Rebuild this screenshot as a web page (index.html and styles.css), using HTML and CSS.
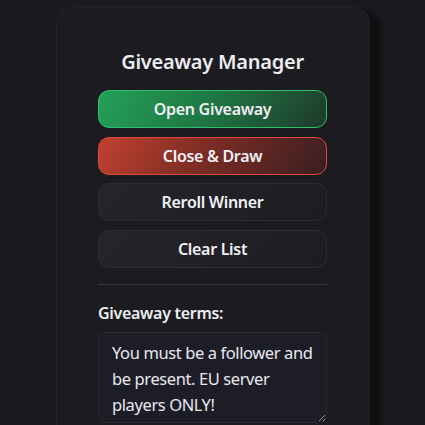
FILE: index.html
```html
<!DOCTYPE html>
<html lang="en">

<head>
    <meta charset="UTF-8">
    <meta name="viewport" content="width=device-width, initial-scale=1.0">
    <title>Giveaway Manager</title>
    <link rel="stylesheet" href="styles.css">
</head>

<body>
    <div class="panel">
        <h1 class="panel-title">Giveaway Manager</h1>
        <div class="actions">
            <button class="btn btn-open">Open Giveaway</button>
            <button class="btn btn-close">Close &amp; Draw</button>
            <button class="btn">Reroll Winner</button>
            <button class="btn">Clear List</button>
        </div>
        <hr class="divider">
        <label class="terms-label" for="terms">Giveaway terms:</label>
        <textarea id="terms" class="terms">You must be a follower and be present. EU server players ONLY!</textarea>
    </div>
</body>

</html>
```
FILE: styles.css
```css
body {
    margin: 0;
    height: 100vh;
    background: #1a191d;
    font-family: "Noto Sans", "Open Sans", sans-serif;
    color: #ececf2;
    overflow: hidden;
}

.panel {
    width: 229px;
    height: 420px;
    margin: 6px 0 0 56px;
    padding: 38px 42px 20px 41px;
    background: #1c1b20;
    border: 1px solid #242329;
    border-radius: 18px;
    box-shadow: 11px 4px 4px rgba(0, 0, 0, 0.4);
}

.panel-title {
    margin: 0 0 11px;
    text-align: center;
    font-size: 20px;
    font-weight: 600;
    line-height: 34px;
    letter-spacing: -0.25px;
}

.actions {
    display: flex;
    flex-direction: column;
    gap: 8.5px;
}

.btn {
    height: 38px;
    font-family: inherit;
    font-size: 16px;
    font-weight: 600;
    letter-spacing: -0.3px;
    color: #f1f1f5;
    border-radius: 11px;
    border: 1px solid #2d2c33;
    background: linear-gradient(135deg, #26252b, #1d1c21);
    cursor: pointer;
}

.btn-open {
    border-color: #2fbf6a;
    background: linear-gradient(120deg, #23a158 0%, #1f7a45 45%, #1f3a2b 100%);
}

.btn-close {
    border-color: #d84a3a;
    background: linear-gradient(120deg, #c2402f 0%, #7c2d25 45%, #3a1e21 100%);
}

.divider {
    margin: 16px 0 17px;
    border: none;
    border-top: 1px solid #3a3940;
}

.terms-label {
    display: block;
    font-size: 16px;
    font-weight: 600;
    letter-spacing: -0.3px;
    margin-bottom: 8px;
}

.terms {
    box-sizing: border-box;
    width: 229px;
    height: 91px;
    padding: 7px 10px 7px 13px;
    font-family: inherit;
    font-size: 16.5px;
    line-height: 26px;
    letter-spacing: -0.4px;
    color: #e8e8ef;
    background: #1d1d27;
    border: 1px solid #2a2a33;
    border-radius: 8px;
    resize: vertical;
}
```
